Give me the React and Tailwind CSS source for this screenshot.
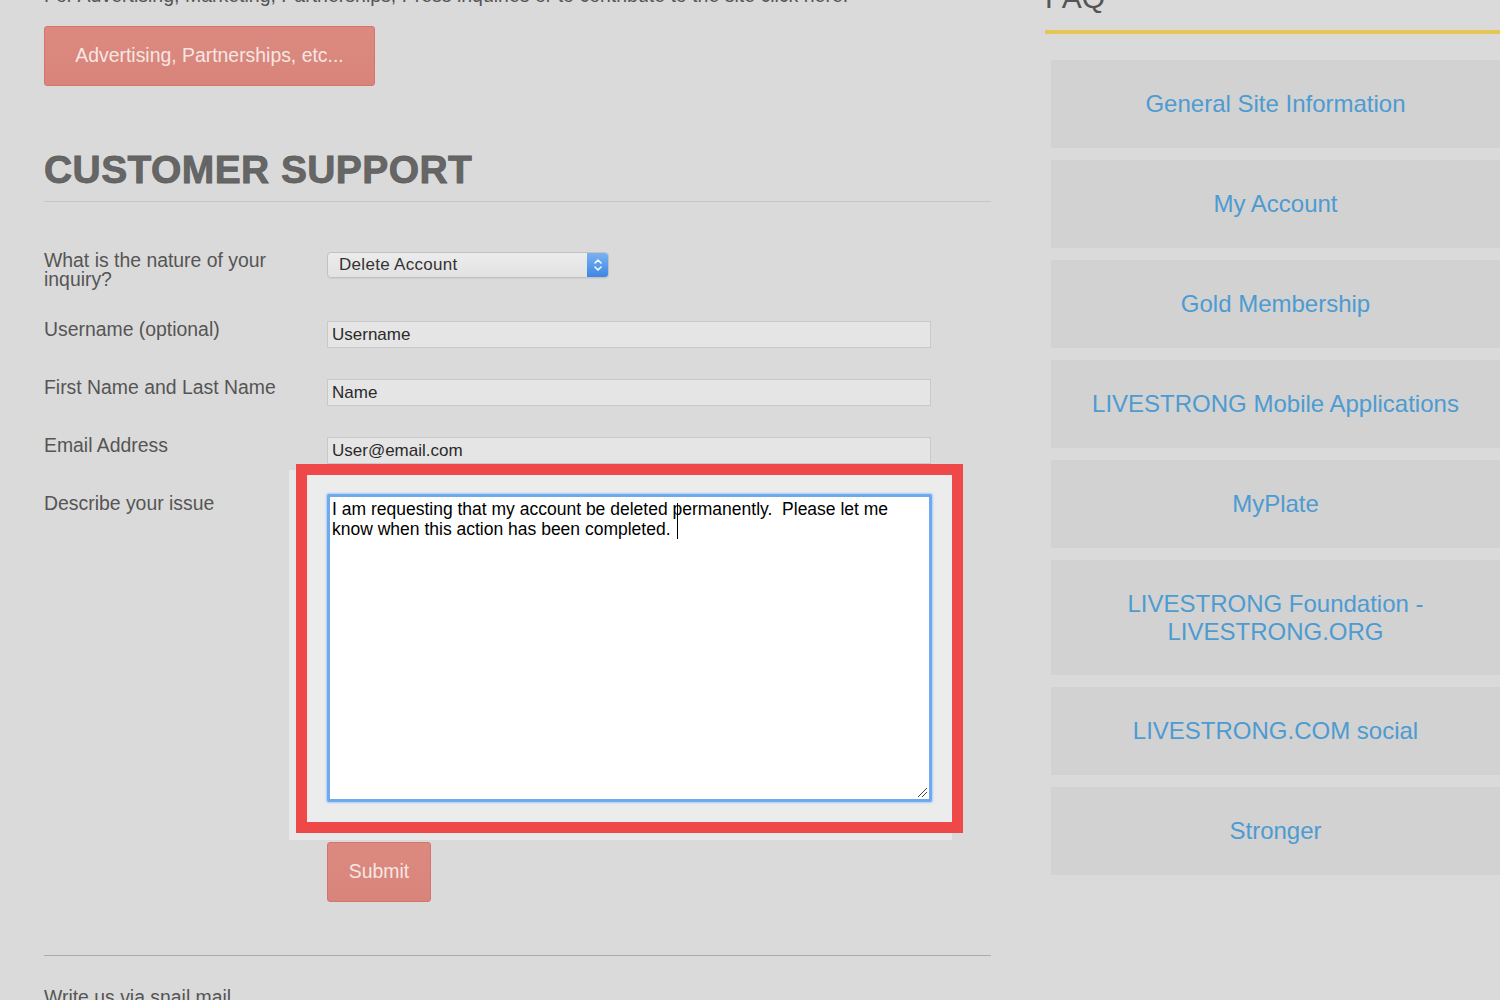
const faqItems = [
  "General Site Information",
  "My Account",
  "Gold Membership",
  "LIVESTRONG Mobile Applications",
  "MyPlate",
  "LIVESTRONG Foundation - LIVESTRONG.ORG",
  "LIVESTRONG.COM social",
  "Stronger",
];

function FormRow({ label, children, className = "" }) {
  return (
    <div className={`grid grid-cols-[283px_605px] items-start ${className}`}>
      <label className="text-[19.4px] leading-[19px] text-[#555]">{label}</label>
      <div>{children}</div>
    </div>
  );
}

function TextInput({ value }) {
  return (
    <div className="mt-[1px] flex h-[27px] w-[604px] items-center border border-[#c9c9c9] bg-[#e5e5e5] pl-[4px] pt-[1px] text-[17px] text-[#2a2a2a]">
      {value}
    </div>
  );
}

function SelectBox() {
  return (
    <div className="mt-[1px] flex h-[26px] w-[282px] overflow-hidden rounded-[4px] border border-[#c2c2c2] bg-gradient-to-b from-[#ececec] to-[#e2e2e2] shadow-[0_1px_0_#cfcfcf]">
      <div className="flex flex-1 items-center pl-[11px] text-[17px] tracking-[0.3px] text-[#333]">Delete Account</div>
      <div className="flex w-[21px] items-center justify-center bg-gradient-to-b from-[#78b2f2] to-[#3f86e2]">
        <svg width="10" height="16" viewBox="0 0 10 16" fill="none" stroke="white" strokeWidth="1.5" strokeLinecap="round" strokeLinejoin="round">
          <path d="M2 6 L5 3 L8 6" />
          <path d="M2 10 L5 13 L8 10" />
        </svg>
      </div>
    </div>
  );
}

function RedButton({ children, className = "" }) {
  return (
    <button
      className={`flex items-center justify-center rounded-[3px] border border-[#d6736a] bg-gradient-to-b from-[#dc8a80] to-[#d8847a] text-[19.4px] text-[#f6e6e3] ${className}`}
    >
      {children}
    </button>
  );
}

export default function App() {
  return (
    <div
      className="relative h-[1000px] w-[1500px] overflow-hidden bg-[#dadada]"
      style={{ fontFamily: '"Liberation Sans", Arial, sans-serif' }}
    >
      {/* highlight backdrop behind the annotated textarea */}
      <div className="absolute left-[289px] top-[470px] h-[370px] w-[663px] bg-[#e8e8e8]" />
      <div className="absolute left-[307px] top-[475px] h-[347px] w-[645px] bg-[#ececec]" />

      <div className="relative z-10 mt-[-16px] flex pl-[44px]">
        {/* main column */}
        <div className="w-[947px]">
          <p className="text-[19.5px] leading-[22px] text-[#555]">
            For Advertising, Marketing, Partnerships, Press inquiries or to contribute to the site click here.
          </p>
          <RedButton className="mt-[20px] h-[60px] w-[331px]">Advertising, Partnerships, etc...</RedButton>

          <div className="mt-[64px] border-b border-[#c6c6c6] pb-[12px]">
            <h1 className="text-[39px] font-bold leading-[39px] tracking-[0.4px] text-[#666] [-webkit-text-stroke:0.8px_#5e5e5e]">
              CUSTOMER SUPPORT
            </h1>
          </div>

          <div className="mt-[49px] flex flex-col gap-[30px]">
            <FormRow label={<>What is the nature of your<br />inquiry?</>} className="pb-[1px]">
              <SelectBox />
            </FormRow>
            <FormRow label="Username (optional)">
              <TextInput value="Username" />
            </FormRow>
            <FormRow label="First Name and Last Name">
              <TextInput value="Name" />
            </FormRow>
            <FormRow label="Email Address">
              <TextInput value="User@email.com" />
            </FormRow>
            <FormRow label="Describe your issue">
              <div className="relative h-[308px] w-[605px] rounded-[2px] border-[3px] border-[#6fa9ee] bg-white pl-[2px] pt-[3px] text-[17.5px] leading-[19.5px] text-black shadow-[0_0_2px_1px_#a8ccf4]">
                <p className="whitespace-pre-wrap">
                  {"I am requesting that my account be deleted permanently.  Please let me\nknow when this action has been completed."}
                </p>
                <div className="absolute left-[347px] top-[6px] h-[36px] w-[1px] bg-black" />
                <svg className="absolute bottom-[1px] right-[1px]" width="11" height="11" viewBox="0 0 11 11" stroke="#444" strokeWidth="1">
                  <path d="M1 10 L10 1" />
                  <path d="M5 10 L10 5" />
                </svg>
              </div>
            </FormRow>
          </div>

          <RedButton className="ml-[283px] mt-[40px] h-[60px] w-[104px]">Submit</RedButton>

          <div className="mt-[53px] border-t border-[#ababab] pt-[30px]">
            <p className="text-[19.4px] leading-[22px] text-[#555]">Write us via snail mail</p>
          </div>
        </div>

        {/* FAQ column */}
        <div className="ml-[54px] flex-1">
          <div className="mt-[-1px] border-b-4 border-[#e6c555] pb-[17px]">
            <h2 className="text-[30px] leading-[30px] text-[#555]">FAQ</h2>
          </div>
          <div className="ml-[6px] mt-[26px] flex flex-col gap-[12px]">
            {faqItems.map((item) => (
              <div
                key={item}
                className={`flex items-center justify-center bg-[#d2d2d2] px-[20px] text-center text-[24px] leading-[28px] text-[#4d9bd1] ${
                  item.startsWith("LIVESTRONG Foundation") ? "h-[115px]" : "h-[88px]"
                }`}
              >
                {item.startsWith("LIVESTRONG Foundation") ? (
                  <span>
                    LIVESTRONG Foundation -<br />LIVESTRONG.ORG
                  </span>
                ) : (
                  item
                )}
              </div>
            ))}
          </div>
        </div>
      </div>

      {/* red annotation frame */}
      <div className="pointer-events-none absolute left-[296px] top-[464px] z-20 h-[369px] w-[667px] border-[11px] border-[#ef4848]" />
    </div>
  );
}
